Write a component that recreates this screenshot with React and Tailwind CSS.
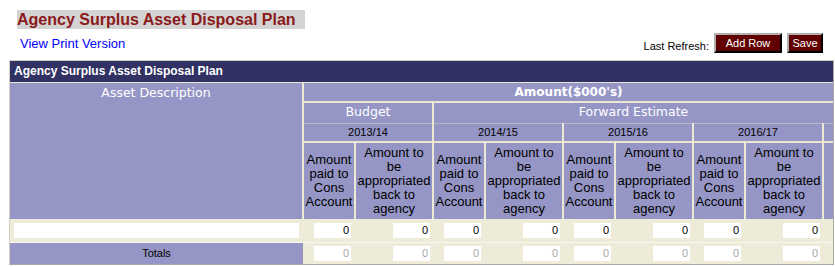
import React from "react";

const years = ["2013/14", "2014/15", "2015/16", "2016/17"];

function NumInput({ disabled }) {
  return (
    <div
      className={`ml-auto h-[15px] w-[37px] bg-white text-right pr-[2px] text-[11px] leading-[15px] ${
        disabled ? "text-[#a8a8a8]" : "text-black"
      }`}
    >
      0
    </div>
  );
}

export default function App() {
  const arial = { fontFamily: '"Liberation Sans", Arial, sans-serif' };
  const verdana = { fontFamily: '"DejaVu Sans", Verdana, sans-serif' };
  return (
    <div className="w-[835px] h-[267px] bg-white overflow-hidden" style={arial}>
      <div className="pt-[8px] pl-[17px] h-[27px]">
        <div className="inline-block bg-[#d3d3d3] h-[19px] leading-[19px] text-[16px] font-bold text-[#8b1a1a] pr-[9px]">
          Agency Surplus Asset Disposal Plan
        </div>
      </div>
      <div className="h-[33px] flex items-end justify-between pl-[20px] pr-[12px] pb-[7px]">
        <div className="text-[13px] leading-[15px] text-[#0000ff] mb-[2px]">View Print Version</div>
        <div className="flex items-end">
          <span className="text-[11px] leading-[13px] text-black mr-[5px]">Last Refresh:</span>
          <button className="h-[20px] w-[68px] bg-[#600000] text-white text-[11px] border-2 border-l-[#b0b0b0] border-t-[#b0b0b0] border-r-black border-b-black">
            Add Row
          </button>
          <button className="ml-[5px] h-[20px] w-[36px] bg-[#600000] text-white text-[11px] border-2 border-l-[#b0b0b0] border-t-[#b0b0b0] border-r-black border-b-black">
            Save
          </button>
        </div>
      </div>
      <div className="ml-[9px] w-[825px] border border-[#d4d0c0] border-b-[#a8a8a0] border-r-[#a8a8a0]">
        <table className="w-[823px] table-fixed border-collapse">
          <colgroup>
            <col className="w-[293px]" />
            {[0, 1, 2, 3].map((i) => (
              <React.Fragment key={i}>
                <col className="w-[52px]" />
                <col className="w-[78px]" />
              </React.Fragment>
            ))}
            <col className="w-[10px]" />
          </colgroup>
          <tbody>
            <tr className="h-[21px] bg-[#313163]">
              <td colSpan={10} className="pl-[4px] text-white font-bold text-[12px] border-b border-[#e8e6d4]">
                Agency Surplus Asset Disposal Plan
              </td>
            </tr>
            <tr className="h-[20px] bg-[#9696c6]">
              <td
                rowSpan={4}
                className="align-top text-center text-white text-[12.5px] leading-[16px] pt-[2px] border-r-2 border-[#ebe8d5]"
                style={verdana}
              >
                Asset Description
              </td>
              <td colSpan={9} className="text-center text-white font-bold text-[12px] border-b-2 border-[#ebe8d5]" style={verdana}>
                Amount($000's)
              </td>
            </tr>
            <tr className="h-[21px] bg-[#9696c6]">
              <td colSpan={2} className="text-center text-white text-[12.5px] border-r-2 border-b border-r-[#ebe8d5] border-b-[#b8b8c0]" style={verdana}>
                Budget
              </td>
              <td colSpan={7} className="text-center text-white text-[12.5px] border-b border-[#b8b8c0]" style={verdana}>
                Forward Estimate
              </td>
            </tr>
            <tr className="h-[19px] bg-[#9696c6]">
              {years.map((y) => (
                <td key={y} colSpan={2} className="text-center text-black text-[11px] border-r-2 border-b-2 border-[#ebe8d5]">
                  {y}
                </td>
              ))}
              <td className="border-b-2 border-[#ebe8d5]"></td>
            </tr>
            <tr className="h-[77px] bg-[#9696c6]">
              {years.map((y) => (
                <React.Fragment key={y}>
                  <td className="text-center text-black text-[13px] leading-[14px] border-r-2 border-[#ebe8d5]">
                    Amount paid to Cons Account
                  </td>
                  <td className="text-center text-black text-[13px] leading-[14px] border-r-2 border-[#ebe8d5] px-[1px]">
                    Amount to be appropriated back to agency
                  </td>
                </React.Fragment>
              ))}
              <td></td>
            </tr>
            <tr className="h-[23px] bg-[#eeecd8] border-b border-[#f8f8f0]">
              <td className="pl-[4px] pr-[3px]">
                <div className="h-[15px] w-[285px] bg-white"></div>
              </td>
              {years.map((y) => (
                <React.Fragment key={y}>
                  <td className="pr-[4px]">
                    <NumInput />
                  </td>
                  <td className="pr-[3px]">
                    <NumInput />
                  </td>
                </React.Fragment>
              ))}
              <td></td>
            </tr>
            <tr className="h-[22px] bg-[#eeecd8]">
              <td className="bg-[#9696c6] text-center text-black text-[11px]">Totals</td>
              {years.map((y) => (
                <React.Fragment key={y}>
                  <td className="pr-[4px]">
                    <NumInput disabled />
                  </td>
                  <td className="pr-[3px]">
                    <NumInput disabled />
                  </td>
                </React.Fragment>
              ))}
              <td></td>
            </tr>
          </tbody>
        </table>
      </div>
    </div>
  );
}
